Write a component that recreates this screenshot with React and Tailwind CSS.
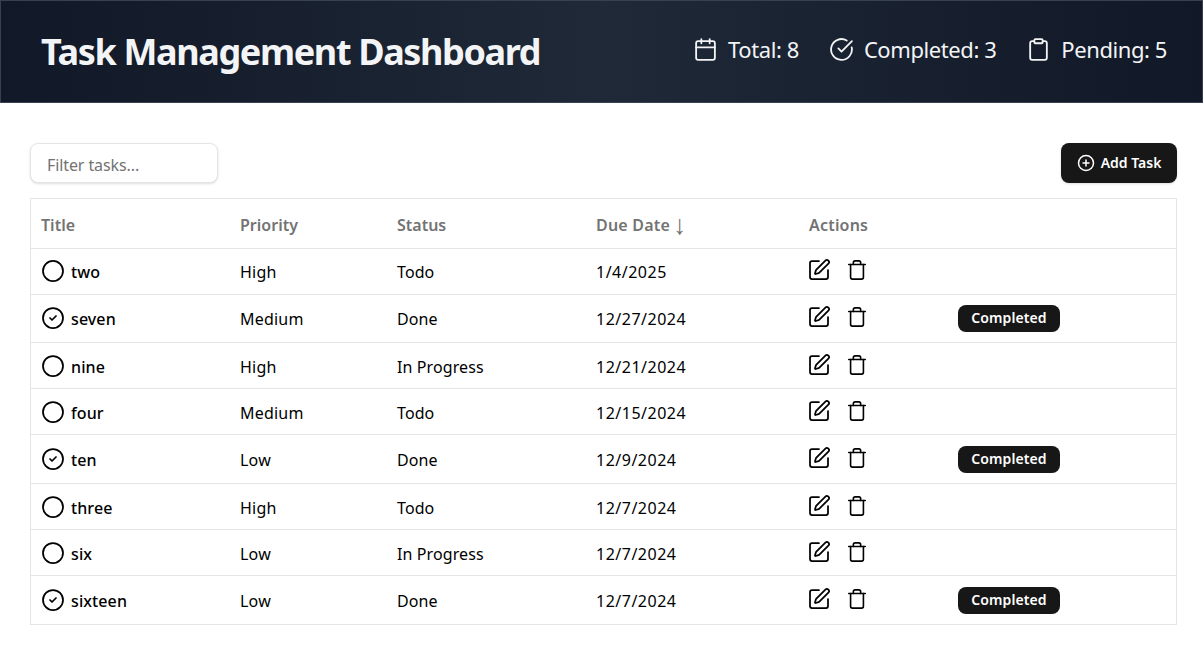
import React from "react";
import {
  Calendar,
  Circle,
  CircleCheck,
  CircleCheckBig,
  CirclePlus,
  Clipboard,
  SquarePen,
  Trash,
} from "lucide-react";

const tasks = [
  { title: "two", priority: "High", status: "Todo", due: "1/4/2025" },
  { title: "seven", priority: "Medium", status: "Done", due: "12/27/2024" },
  { title: "nine", priority: "High", status: "In Progress", due: "12/21/2024" },
  { title: "four", priority: "Medium", status: "Todo", due: "12/15/2024" },
  { title: "ten", priority: "Low", status: "Done", due: "12/9/2024" },
  { title: "three", priority: "High", status: "Todo", due: "12/7/2024" },
  { title: "six", priority: "Low", status: "In Progress", due: "12/7/2024" },
  { title: "sixteen", priority: "Low", status: "Done", due: "12/7/2024" },
];

const Stat = ({ icon: Icon, label }) => (
  <div className="flex items-center gap-2.5">
    <Icon size={25} strokeWidth={1.75} />
    <span className="text-[22px] tracking-[-0.42px]">{label}</span>
  </div>
);

const App = () => {
  return (
    <div className="min-h-[647px] bg-white font-['Noto_Sans',sans-serif] text-black">
      <header className="flex h-[103px] items-center justify-between border border-[#374151] bg-linear-to-r from-[#111827] via-[#1f2937] to-[#111827] pl-10 pr-[35px] text-[#f3f4f6]">
        <h1 className="text-[36px] font-bold tracking-[-1.36px]">Task Management Dashboard</h1>
        <div className="flex items-center gap-[30px] pb-1">
          <Stat icon={Calendar} label="Total: 8" />
          <Stat icon={CircleCheckBig} label="Completed: 3" />
          <Stat icon={Clipboard} label="Pending: 5" />
        </div>
      </header>

      <main className="pl-[30px] pr-[26px] pt-10">
        <div className="mb-[15px] flex items-center justify-between">
          <input
            type="text"
            placeholder="Filter tasks..."
            className="h-10 w-[188px] rounded-lg border border-[#e5e5e5] bg-white px-4 pt-1 text-base tracking-[-0.1px] shadow-sm outline-none placeholder:text-[#737373]"
          />
          <button className="flex h-10 w-[116px] items-center justify-center gap-1.5 rounded-lg bg-[#171717] text-sm font-semibold text-white shadow-sm">
            <CirclePlus size={18} />
            Add Task
          </button>
        </div>

        <div className="border border-[#e5e5e5]">
          <table className="w-full table-fixed border-collapse text-left text-base">
            <thead>
              <tr className="h-[49px] border-b border-[#e5e5e5] text-[#737373]">
                <th className="w-[199px] pl-2.5 pt-1 font-semibold">Title</th>
                <th className="w-[157px] pl-2.5 pt-1 font-semibold">Priority</th>
                <th className="w-[199px] pl-2.5 pt-1 font-semibold">Status</th>
                <th className="w-[213px] pl-2.5 pt-1 font-semibold tracking-[0.2px]">
                  <span className="flex h-6 items-center gap-[3px]">
                    Due Date
                    <span className="font-['Liberation_Sans',sans-serif] text-[27px] font-normal leading-none">↓</span>
                  </span>
                </th>
                <th className="w-[149px] pl-2.5 pt-1 font-semibold tracking-[0.2px]">Actions</th>
                <th></th>
              </tr>
            </thead>
            <tbody>
              {tasks.map((task) => {
                const done = task.status === "Done";
                return (
                  <tr key={task.title} className="h-[46px] border-b border-[#e5e5e5] last:border-b-0">
                    <td className="py-[10px] pl-2.5">
                      <div className="flex h-6 items-center gap-1.5 font-medium tracking-[0.1px]">
                        {done ? <CircleCheck size={24} strokeWidth={1.75} /> : <Circle size={24} strokeWidth={1.75} />}
                        <span className="pt-0.5 leading-[22px]">{task.title}</span>
                      </div>
                    </td>
                    <td className="pl-2.5 pt-0.5 tracking-[0.2px]">{task.priority}</td>
                    <td className="pl-2.5 pt-0.5 tracking-[0.1px]">{task.status}</td>
                    <td className="pl-2.5 pt-0.5 tracking-[0.5px]">{task.due}</td>
                    <td className="pl-2.5">
                      <div className="-ml-0.5 -mt-0.5 flex items-center gap-[15px]">
                        <SquarePen size={24} strokeWidth={1.75} />
                        <Trash size={22} strokeWidth={1.75} />
                      </div>
                    </td>
                    <td className="py-[10.46px] pl-2.5">
                      {done && (
                        <span className="flex h-[27px] w-[102px] items-center justify-center rounded-lg bg-[#171717] text-sm font-semibold tracking-[0.1px] text-white">
                          Completed
                        </span>
                      )}
                    </td>
                  </tr>
                );
              })}
            </tbody>
          </table>
        </div>
      </main>
    </div>
  );
};

export default App;
